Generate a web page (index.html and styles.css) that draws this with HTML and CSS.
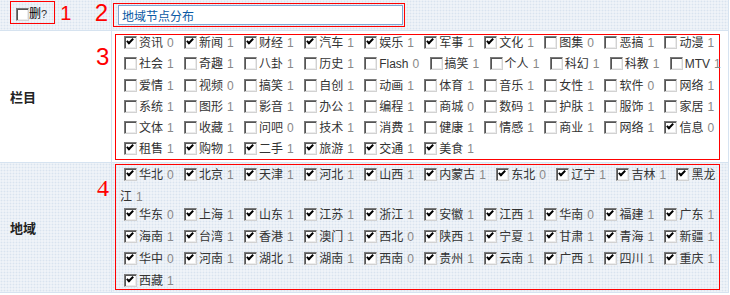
FILE: index.html
```html
<!DOCTYPE html>
<html>
<head>
    <meta charset="utf-8">
    <title>地域节点分布</title>
    <link rel="stylesheet" href="styles.css">
</head>
<body>
    <table class="form">
        <tr class="row-head dotted">
            <td class="head-cell">
                <div class="del-line">
                    <label class="del-box"><input type="checkbox">删<span class="help">?</span></label>
                    <span class="mark mark-1">1</span>
                    <span class="mark mark-2">2</span>
                </div>
            </td>
            <td>
                <div class="title-box">
                    <input type="text" class="title-input" value="地域节点分布">
                </div>
            </td>
        </tr>
        <tr>
            <td class="label">栏目<span class="mark mark-3">3</span></td>
            <td class="opts-cell">
                <div class="opts opts-col">
                    <input type="checkbox" checked>资讯<span class="num">0</span>
                    <input type="checkbox" checked>新闻<span class="num">1</span>
                    <input type="checkbox" checked>财经<span class="num">1</span>
                    <input type="checkbox" checked>汽车<span class="num">1</span>
                    <input type="checkbox" checked>娱乐<span class="num">1</span>
                    <input type="checkbox" checked>军事<span class="num">1</span>
                    <input type="checkbox" checked>文化<span class="num">1</span>
                    <input type="checkbox">图集<span class="num">0</span>
                    <input type="checkbox">恶搞<span class="num">1</span>
                    <input type="checkbox">动漫<span class="num">1</span>
                    <br>
                    <input type="checkbox">社会<span class="num">1</span>
                    <input type="checkbox">奇趣<span class="num">1</span>
                    <input type="checkbox">八卦<span class="num">1</span>
                    <input type="checkbox">历史<span class="num">1</span>
                    <input type="checkbox">Flash<span class="num">0</span>
                    <input type="checkbox">搞笑<span class="num">1</span>
                    <input type="checkbox">个人<span class="num">1</span>
                    <input type="checkbox">科幻<span class="num">1</span>
                    <input type="checkbox">科教<span class="num">1</span>
                    <input type="checkbox">MTV<span class="num">1</span>
                    <br>
                    <input type="checkbox">爱情<span class="num">1</span>
                    <input type="checkbox">视频<span class="num">0</span>
                    <input type="checkbox">搞笑<span class="num">1</span>
                    <input type="checkbox">自创<span class="num">1</span>
                    <input type="checkbox">动画<span class="num">1</span>
                    <input type="checkbox">体育<span class="num">1</span>
                    <input type="checkbox">音乐<span class="num">1</span>
                    <input type="checkbox">女性<span class="num">1</span>
                    <input type="checkbox">软件<span class="num">0</span>
                    <input type="checkbox">网络<span class="num">1</span>
                    <br>
                    <input type="checkbox">系统<span class="num">1</span>
                    <input type="checkbox">图形<span class="num">1</span>
                    <input type="checkbox">影音<span class="num">1</span>
                    <input type="checkbox">办公<span class="num">1</span>
                    <input type="checkbox">编程<span class="num">1</span>
                    <input type="checkbox">商城<span class="num">0</span>
                    <input type="checkbox">数码<span class="num">1</span>
                    <input type="checkbox">护肤<span class="num">1</span>
                    <input type="checkbox">服饰<span class="num">1</span>
                    <input type="checkbox">家居<span class="num">1</span>
                    <br>
                    <input type="checkbox">文体<span class="num">1</span>
                    <input type="checkbox">收藏<span class="num">1</span>
                    <input type="checkbox">问吧<span class="num">0</span>
                    <input type="checkbox">技术<span class="num">1</span>
                    <input type="checkbox">消费<span class="num">1</span>
                    <input type="checkbox">健康<span class="num">1</span>
                    <input type="checkbox">情感<span class="num">1</span>
                    <input type="checkbox">商业<span class="num">1</span>
                    <input type="checkbox">网络<span class="num">1</span>
                    <input type="checkbox" checked>信息<span class="num">0</span>
                    <br>
                    <input type="checkbox" checked>租售<span class="num">1</span>
                    <input type="checkbox" checked>购物<span class="num">1</span>
                    <input type="checkbox" checked>二手<span class="num">1</span>
                    <input type="checkbox" checked>旅游<span class="num">1</span>
                    <input type="checkbox" checked>交通<span class="num">1</span>
                    <input type="checkbox" checked>美食<span class="num">1</span>
                </div>
            </td>
        </tr>
        <tr class="dotted">
            <td class="label">地域<span class="mark mark-4">4</span></td>
            <td class="opts-cell opts-cell-area">
                <div class="opts opts-area">
                    <input type="checkbox" checked>华北<span class="num">0</span>
                    <input type="checkbox" checked>北京<span class="num">1</span>
                    <input type="checkbox" checked>天津<span class="num">1</span>
                    <input type="checkbox" checked>河北<span class="num">1</span>
                    <input type="checkbox" checked>山西<span class="num">1</span>
                    <input type="checkbox" checked>内蒙古<span class="num">1</span>
                    <input type="checkbox" checked>东北<span class="num">0</span>
                    <input type="checkbox" checked>辽宁<span class="num">1</span>
                    <input type="checkbox" checked>吉林<span class="num">1</span>
                    <input type="checkbox" checked>黑龙江<span class="num">1</span>
                    <br>
                    <input type="checkbox" checked>华东<span class="num">0</span>
                    <input type="checkbox" checked>上海<span class="num">1</span>
                    <input type="checkbox" checked>山东<span class="num">1</span>
                    <input type="checkbox" checked>江苏<span class="num">1</span>
                    <input type="checkbox" checked>浙江<span class="num">1</span>
                    <input type="checkbox" checked>安徽<span class="num">1</span>
                    <input type="checkbox" checked>江西<span class="num">1</span>
                    <input type="checkbox" checked>华南<span class="num">0</span>
                    <input type="checkbox" checked>福建<span class="num">1</span>
                    <input type="checkbox" checked>广东<span class="num">1</span>
                    <br>
                    <input type="checkbox" checked>海南<span class="num">1</span>
                    <input type="checkbox" checked>台湾<span class="num">1</span>
                    <input type="checkbox" checked>香港<span class="num">1</span>
                    <input type="checkbox" checked>澳门<span class="num">1</span>
                    <input type="checkbox" checked>西北<span class="num">0</span>
                    <input type="checkbox" checked>陕西<span class="num">1</span>
                    <input type="checkbox" checked>宁夏<span class="num">1</span>
                    <input type="checkbox" checked>甘肃<span class="num">1</span>
                    <input type="checkbox" checked>青海<span class="num">1</span>
                    <input type="checkbox" checked>新疆<span class="num">1</span>
                    <br>
                    <input type="checkbox" checked>华中<span class="num">0</span>
                    <input type="checkbox" checked>河南<span class="num">1</span>
                    <input type="checkbox" checked>湖北<span class="num">1</span>
                    <input type="checkbox" checked>湖南<span class="num">1</span>
                    <input type="checkbox" checked>西南<span class="num">0</span>
                    <input type="checkbox" checked>贵州<span class="num">1</span>
                    <input type="checkbox" checked>云南<span class="num">1</span>
                    <input type="checkbox" checked>广西<span class="num">1</span>
                    <input type="checkbox" checked>四川<span class="num">1</span>
                    <input type="checkbox" checked>重庆<span class="num">1</span>
                    <br>
                    <input type="checkbox" checked>西藏<span class="num">1</span>
                </div>
            </td>
        </tr>
    </table>
</body>
</html>
```

FILE: styles.css
```css
body {
    margin: 0;
    font-family: "Liberation Sans", "Noto Sans CJK SC", sans-serif;
    font-size: 12px;
    color: #333;
    background: #fff;
}

.form {
    border-collapse: separate;
    border-spacing: 0;
    table-layout: fixed;
    width: 729px;
}

.form td {
    padding: 0;
    border-bottom: 1px solid #d6e3f0;
    border-right: 1px solid #d6e3f0;
    vertical-align: top;
}

.form .dotted td {
    background-color: #eff3f8;
    background-image: radial-gradient(circle, #d9e3ef 0.8px, transparent 1.1px);
    background-size: 3px 3px;
}

.row-head td {
    height: 30px;
}

.form td.head-cell,
.form td.label {
    width: 101px;
    padding-left: 10px;
}

.form td.label {
    position: relative;
    vertical-align: middle;
    font-size: 13px;
    font-weight: bold;
    color: #222;
}

/* checkboxes, old windows look */
input[type="checkbox"] {
    -webkit-appearance: none;
    appearance: none;
    position: relative;
    flex: none;
    box-sizing: border-box;
    width: 13px;
    height: 13px;
    margin: 0;
    border: 1px solid;
    border-color: #7a7a7a #d2d2d2 #d2d2d2 #7a7a7a;
    box-shadow: inset 1px 1px #555, inset -1px -1px #ececec;
    background: #fff;
}

input[type="checkbox"]:checked::after {
    content: "";
    position: absolute;
    left: 3px;
    top: 0px;
    width: 2px;
    height: 5px;
    border: solid #000;
    border-width: 0 2px 2px 0;
    transform: rotate(45deg);
}

/* row 1 */
.del-line {
    display: flex;
    align-items: center;
    height: 23px;
    margin-top: 1px;
}

.del-box {
    display: flex;
    flex: none;
    align-items: flex-end;
    box-sizing: border-box;
    height: 23px;
    padding: 0 7px 2px 5px;
    border: 1px solid #f00;
    line-height: 13px;
    color: #000;
}

.help {
    font-size: 11px;
    color: #333;
}

.title-box {
    display: flex;
    width: max-content;
    margin: 3px 0 0 1px;
    padding: 1px 1px 1px 4px;
    border: 1px solid #f00;
}

.title-input {
    box-sizing: border-box;
    width: 285px;
    height: 20px;
    margin: 0;
    padding: 0 3px;
    border: 1px solid #7fa5d2;
    font-family: "Liberation Sans", "Noto Sans CJK SC", sans-serif;
    font-size: 12px;
    color: #0b5aa5;
    background: #fff;
}

/* red notes */
.mark {
    color: #f00;
    font-weight: normal;
    line-height: 24px;
}

.mark-1 {
    margin-left: 5px;
    font-size: 20px;
}

.mark-2 {
    margin-left: auto;
    margin-right: 3px;
    font-size: 24px;
}

.mark-3 {
    position: absolute;
    top: 14px;
    left: 96px;
    font-size: 24px;
}

.mark-4 {
    position: absolute;
    top: 13px;
    left: 97px;
    font-family: "Liberation Serif", serif;
    font-size: 24px;
}

/* option lists */
.form td.opts-cell {
    padding: 3px 8px 2px 3px;
}

.form td.opts-cell-area {
    padding-top: 1px;
}

.opts {
    box-sizing: border-box;
    width: 605px;
    height: 126px;
    padding: 0 0 0 4px;
    border: 1px solid #f00;
    line-height: 17px;
    word-spacing: 3px;
}

.opts input[type="checkbox"] {
    margin: 1px 2px 7.25px 4px;
    vertical-align: top;
}

.opts-col {
    white-space: nowrap;
}

.opts-area {
    padding-top: 1px;
    line-height: 18px;
}

.opts-area input[type="checkbox"] {
    margin: 2px 2px 7px 4px;
}

.num {
    margin-left: 4px;
    color: #888;
}
```
